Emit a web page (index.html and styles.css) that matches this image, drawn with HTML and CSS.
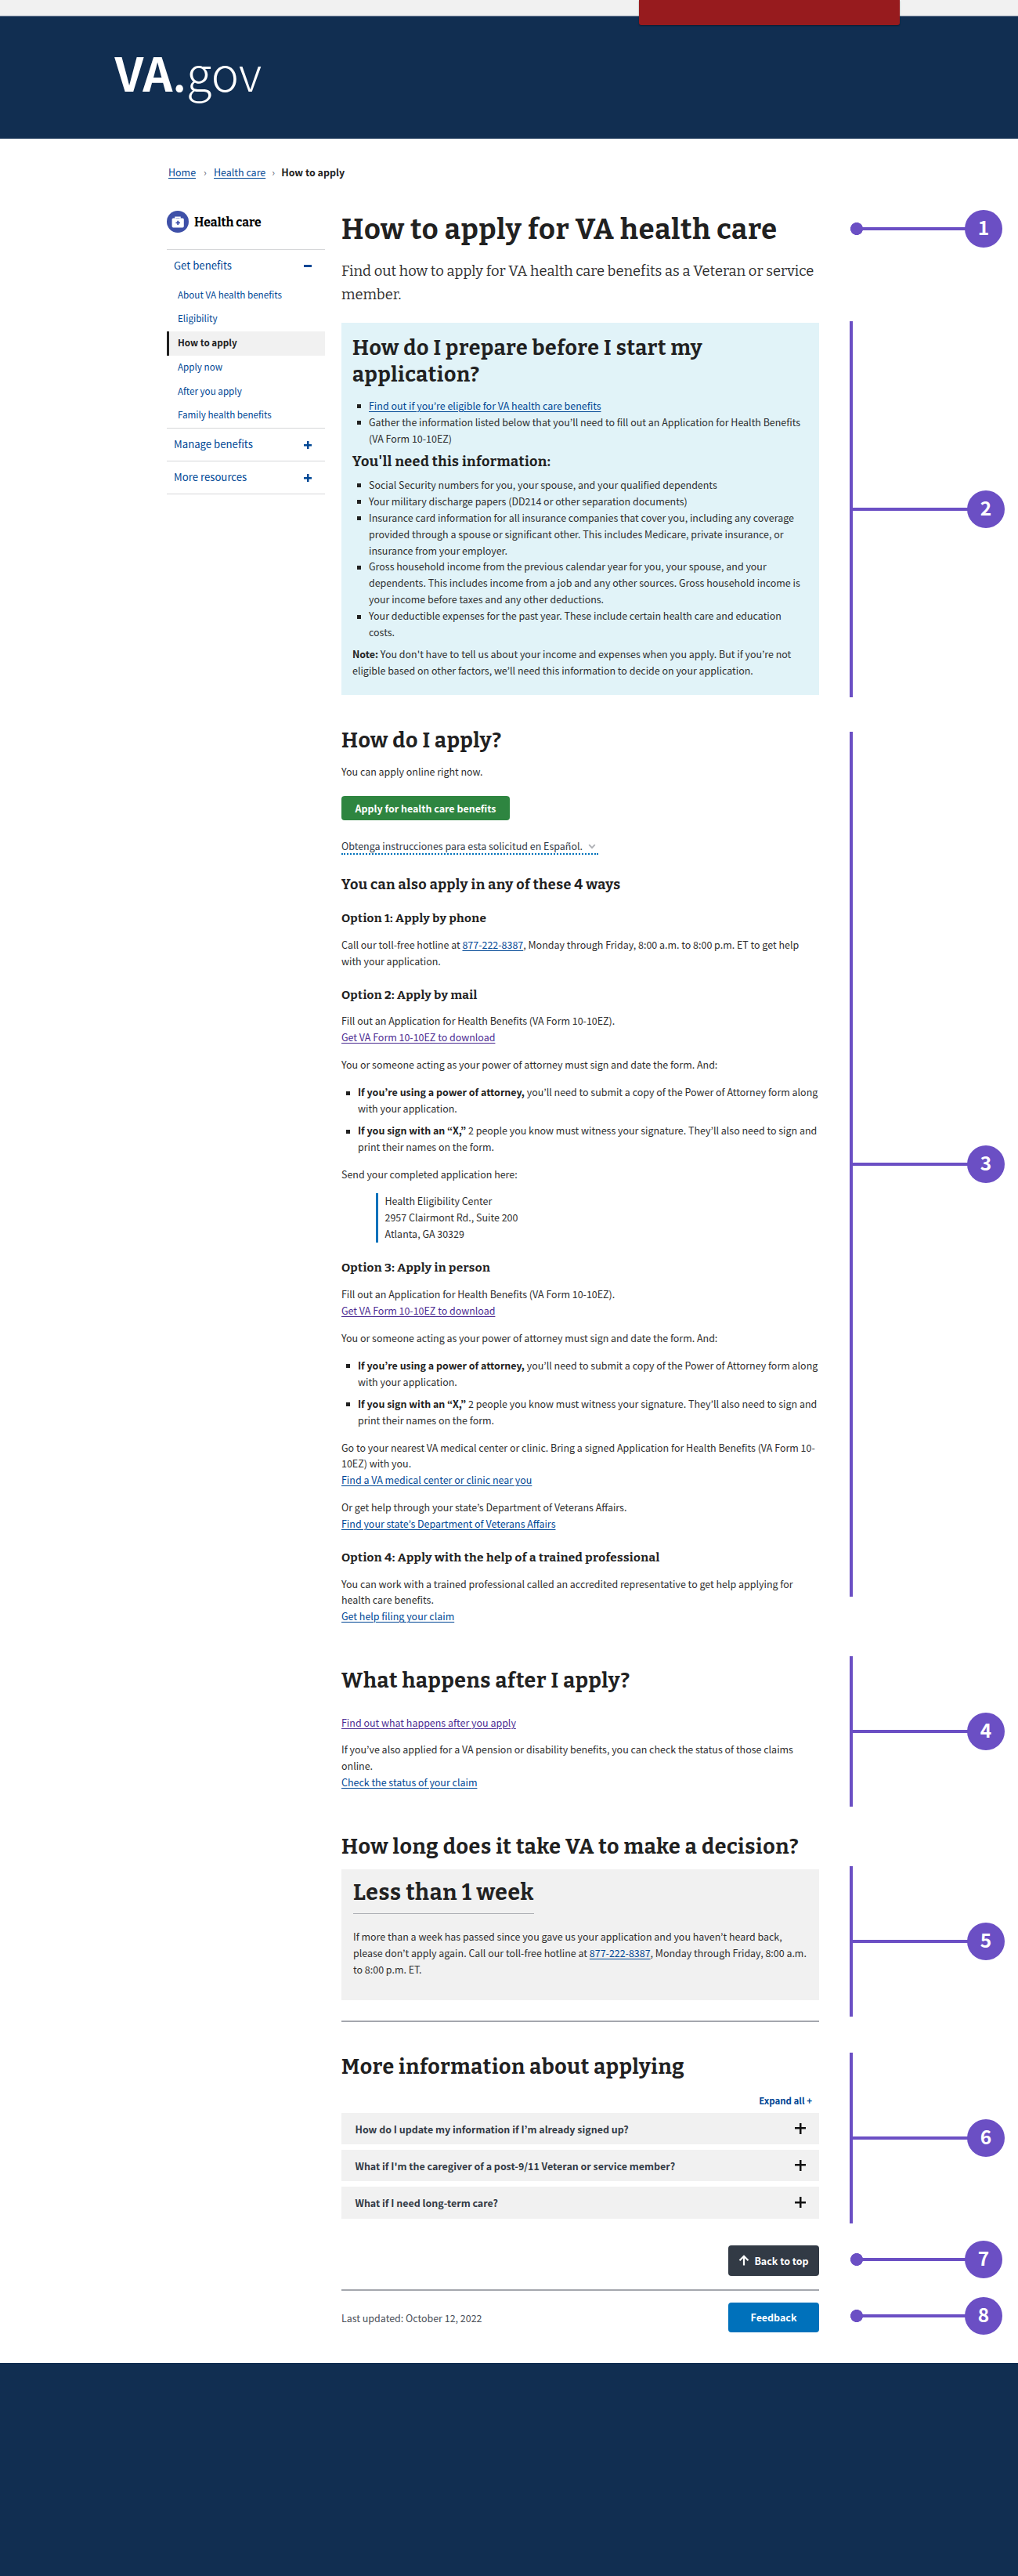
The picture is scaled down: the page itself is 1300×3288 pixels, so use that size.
FILE: index.html
```html
<!DOCTYPE html>
<html lang="en">
<head>
<meta charset="utf-8">
<title>How to apply for VA health care</title>
<link rel="stylesheet" href="styles.css">
</head>
<body>
<div class="page">
  <div class="topbar"><div class="topbar-tab"></div></div>
  <header class="header"><div class="logo"><b>VA</b><span class="logo-dot">.</span>gov</div></header>

  <nav class="breadcrumb">
    <a href="#">Home</a><span class="sep sep-first">›</span><a href="#">Health care</a><span class="sep">›</span><b>How to apply</b>
  </nav>

  <div class="columns">
    <aside class="sidebar">
      <div class="side-title">
        <svg class="side-icon" viewBox="0 0 28 28"><circle cx="14" cy="14" r="14" fill="#3e50a8"/><path d="M11 9.800V8.300h6v1.500" fill="none" stroke="#fff" stroke-width="1.500"/><rect x="6.600" y="9.400" width="15.200" height="12" rx="1.600" fill="#fff"/><path d="M14.200 12.700v5.400M11.500 15.400h5.400" stroke="#3e50a8" stroke-width="1.900"/></svg>
        <span>Health care</span>
      </div>
      <div class="side-group">
        <div class="side-head">Get benefits<i class="sign minus"></i></div>
        <ul class="side-list">
          <li>About VA health benefits</li>
          <li>Eligibility</li>
          <li class="active">How to apply</li>
          <li>Apply now</li>
          <li>After you apply</li>
          <li>Family health benefits</li>
        </ul>
      </div>
      <div class="side-group"><div class="side-head">Manage benefits<i class="sign plus"></i></div></div>
      <div class="side-group last"><div class="side-head">More resources<i class="sign plus"></i></div></div>
    </aside>

    <main class="main">
      <h1>How to apply for VA health care</h1>
      <p class="intro">Find out how to apply for VA health care benefits as a Veteran or service<br>member.</p>

      <section class="prepare">
        <h2>How do I prepare before I start my<br>application?</h2>
        <ul class="list">
          <li><a href="#">Find out if you’re eligible for VA health care benefits</a></li>
          <li>Gather the information listed below that you’ll need to fill out an Application for Health Benefits<br>(VA Form 10-10EZ)</li>
        </ul>
        <h3>You'll need this information:</h3>
        <ul class="list">
          <li>Social Security numbers for you, your spouse, and your qualified dependents</li>
          <li>Your military discharge papers (DD214 or other separation documents)</li>
          <li>Insurance card information for all insurance companies that cover you, including any coverage<br>provided through a spouse or significant other. This includes Medicare, private insurance, or<br>insurance from your employer.</li>
          <li>Gross household income from the previous calendar year for you, your spouse, and your<br>dependents. This includes income from a job and any other sources. Gross household income is<br>your income before taxes and any other deductions.</li>
          <li>Your deductible expenses for the past year. These include certain health care and education<br>costs.</li>
        </ul>
        <p class="note"><b>Note:</b> You don't have to tell us about your income and expenses when you apply. But if you’re not<br>eligible based on other factors, we’ll need this information to decide on your application.</p>
      </section>

      <section class="apply">
        <h2>How do I apply?</h2>
        <p class="lead">You can apply online right now.</p>
        <button class="btn btn-green">Apply for health care benefits</button>
        <div class="spanish">Obtenga instrucciones para esta solicitud en Español.<svg class="chev" viewBox="0 0 10 7"><path d="M1.200 1.200L5 5.200L8.800 1.200" fill="none" stroke="#aeb0b5" stroke-width="1.800"/></svg></div>
        <h3>You can also apply in any of these 4 ways</h3>

        <h4 class="first">Option 1: Apply by phone</h4>
        <p>Call our toll-free hotline at <a href="#">877-222-8387</a>, Monday through Friday, 8:00 a.m. to 8:00 p.m. ET to get help<br>with your application.</p>

        <h4>Option 2: Apply by mail</h4>
        <p>Fill out an Application for Health Benefits (VA Form 10-10EZ).<br><a class="visited" href="#">Get VA Form 10-10EZ to download</a></p>
        <p>You or someone acting as your power of attorney must sign and date the form. And:</p>
        <ul class="list spaced">
          <li><b>If you’re using a power of attorney,</b> you’ll need to submit a copy of the Power of Attorney form along<br>with your application.</li>
          <li><b>If you sign with an “X,”</b> 2 people you know must witness your signature. They’ll also need to sign and<br>print their names on the form.</li>
        </ul>
        <p>Send your completed application here:</p>
        <address>Health Eligibility Center<br>2957 Clairmont Rd., Suite 200<br>Atlanta, GA 30329</address>

        <h4>Option 3: Apply in person</h4>
        <p>Fill out an Application for Health Benefits (VA Form 10-10EZ).<br><a class="visited" href="#">Get VA Form 10-10EZ to download</a></p>
        <p>You or someone acting as your power of attorney must sign and date the form. And:</p>
        <ul class="list spaced">
          <li><b>If you’re using a power of attorney,</b> you’ll need to submit a copy of the Power of Attorney form along<br>with your application.</li>
          <li><b>If you sign with an “X,”</b> 2 people you know must witness your signature. They’ll also need to sign and<br>print their names on the form.</li>
        </ul>
        <p>Go to your nearest VA medical center or clinic. Bring a signed Application for Health Benefits (VA Form 10-<br>10EZ) with you.<br><a href="#">Find a VA medical center or clinic near you</a></p>
        <p>Or get help through your state’s Department of Veterans Affairs.<br><a href="#">Find your state’s Department of Veterans Affairs</a></p>

        <h4>Option 4: Apply with the help of a trained professional</h4>
        <p>You can work with a trained professional called an accredited representative to get help applying for<br>health care benefits.<br><a href="#">Get help filing your claim</a></p>
      </section>

      <section class="after">
        <h2>What happens after I apply?</h2>
        <p class="lead"><a class="visited" href="#">Find out what happens after you apply</a></p>
        <p>If you’ve also applied for a VA pension or disability benefits, you can check the status of those claims<br>online.<br><a href="#">Check the status of your claim</a></p>
      </section>

      <section class="decision">
        <h2>How long does it take VA to make a decision?</h2>
        <div class="answer">
          <h2>Less than 1 week</h2>
          <p>If more than a week has passed since you gave us your application and you haven’t heard back,<br>please don’t apply again. Call our toll-free hotline at <a href="#">877-222-8387</a>, Monday through Friday, 8:00 a.m.<br>to 8:00 p.m. ET.</p>
        </div>
      </section>

      <section class="more">
        <h2>More information about applying</h2>
        <div class="expand"><span>Expand all +</span></div>
        <div class="accordion">
          <div class="acc"><span>How do I update my information if I’m already signed up?</span><i class="sign plus"></i></div>
          <div class="acc"><span>What if I'm the caregiver of a post-9/11 Veteran or service member?</span><i class="sign plus"></i></div>
          <div class="acc"><span>What if I need long-term care?</span><i class="sign plus"></i></div>
        </div>
      </section>

      <div class="top-row">
        <button class="btn btn-dark"><svg class="arrow" viewBox="0 0 14 14"><path d="M7 13.500V2M1.500 7.300L7 1.800L12.500 7.300" fill="none" stroke="#fff" stroke-width="2.200"/></svg><span>Back to top</span></button>
      </div>
      <div class="updated-row"><span>Last updated: October 12, 2022</span><button class="btn btn-blue">Feedback</button></div>
    </main>
  </div>

  <footer class="footer"></footer>

  <div class="pins">
    <div class="pin dot p1"><b>1</b></div>
    <div class="pin span p2"><b>2</b></div>
    <div class="pin span p3"><b>3</b></div>
    <div class="pin span p4"><b>4</b></div>
    <div class="pin span p5"><b>5</b></div>
    <div class="pin span p6"><b>6</b></div>
    <div class="pin dot p7"><b>7</b></div>
    <div class="pin dot p8"><b>8</b></div>
  </div>
</div>
</body>
</html>
```
FILE: styles.css
```css
* { box-sizing: border-box; }

body {
  margin: 0;
  background: #fff;
  color: #2e2e2e;
  font-family: "Source Sans Pro", "Noto Sans CJK KR", "Open Sans", sans-serif;
  font-size: 12.46px;
  line-height: 20.9px;
}

.page { position: relative; width: 1300px; height: 3288px; display: flex; flex-direction: column; overflow: hidden; }

h1, h2, h3, h4, .intro, .side-title { font-family: Bitter, "DejaVu Serif Condensed", serif; }
h1, h2, h3, h4, p, ul, address { margin: 0; padding: 0; }
h1, h2, h3, h4 { color: #212121; font-weight: 700; letter-spacing: .023em; white-space: nowrap; }
p, li, address { white-space: nowrap; font-style: normal; }
b { color: #212121; }
a { color: #004795; text-underline-offset: 1.5px; text-decoration-thickness: 1px; }
a.visited { color: #4c2c92; }

.topbar { height: 21px; background: #f1f1f1; border-bottom: 1px solid #7d8c9f; padding-left: 816px; }
.topbar-tab { position: relative; width: 333px; height: 32px; background: #971b1e; border-radius: 0 0 3px 3px; box-shadow: 0 1px 2px rgba(0,0,0,.4); }
.header { height: 156px; background: #112e51; padding: 50px 0 0 146.500px; }
.logo { color: #fff; font-size: 59.500px; line-height: 40px; font-weight: 300; }
.logo b { color: #fff; font-weight: 700; }
.logo-dot { font-weight: 500; }

.breadcrumb { display: flex; padding: 33px 0 0 215px; height: 91.500px; }
.sep { color: #5b616b; width: 20px; padding-left: 8px; }
.sep-first { width: 23px; padding-left: 10px; }

.columns { display: flex; gap: 21px; padding-left: 213px; }
.sidebar { width: 202px; }
.side-title { display: flex; align-items: center; gap: 7px; height: 28px; font-size: 15.700px; font-weight: 700; color: #000; }
.side-title span { padding-top: 3px; }
.side-icon { width: 28px; height: 28px; }
.side-group { border-top: 1px solid #d6d7d9; }
.side-title + .side-group { margin-top: 21.500px; }
.side-group.last { border-bottom: 1px solid #d6d7d9; }
.side-head { display: flex; align-items: center; justify-content: space-between; height: 41px; padding: 0 17px 0 9px; color: #004795; font-size: 13.2px; }
.side-list { list-style: none; padding-top: 1.500px; }
.side-list li { height: 30.800px; line-height: 28.500px; padding-left: 14px; font-size: 11.66px; color: #004795; }
.side-list .active { padding-left: 11px; border-left: 3px solid #212121; background: #f1f1f1; color: #212121; font-weight: 700; }

.sign { display: block; width: 10px; height: 10px; background: linear-gradient(currentColor, currentColor) center / 100% 3px no-repeat; }
.sign.plus { background: linear-gradient(currentColor, currentColor) center / 100% 2.500px no-repeat, linear-gradient(currentColor, currentColor) center / 2.500px 100% no-repeat; }

.main { width: 610px; padding-top: 2.500px; }
h1 { font-size: 36.080px; line-height: 44px; }
h2 { font-size: 26.680px; line-height: 34px; }
h3 { font-size: 17.950px; line-height: 24px; }
h4 { font-size: 15.300px; line-height: 22px; margin-top: 21.500px; }
h4 + p { margin-top: 12px; }
p, .list { margin-top: 14px; margin-bottom: -.8px; padding-top: .8px; }
h4 + p { margin-top: 12px; }
.intro { margin: 16px 0 0; padding: 0; font-size: 18.35px; line-height: 30px; }

.list { list-style: none; padding-left: 21px; }
.list li { position: relative; }
.list li::before { content: ""; position: absolute; left: -15px; top: 8.500px; width: 5px; height: 5px; background: #212121; }
.spaced li + li { margin-top: 7.200px; }

.prepare { margin-top: 21px; height: 475px; padding: 15px 14px 0; background: #e1f3f8; }
.prepare h2 + .list { margin-top: 12px; }
.prepare h3 { margin-top: 7px; }
.prepare h3 + .list { margin-top: 7.400px; }
.note { margin-top: 7.300px; }

.apply { margin-top: 41px; }
.apply .lead { margin-top: 12.300px; }
.btn { display: flex; align-items: center; justify-content: center; border: 0; padding: 0; color: #fff; font: 700 12.46px/20px "Source Sans Pro", "Noto Sans CJK KR", sans-serif; border-radius: 4px; }
.btn-green { width: 215px; height: 31px; margin-top: 21px; background: #2e8540; }
.spanish { display: block; width: 328px; margin-top: 23px; height: 20.500px; line-height: 20.600px; color: #323a45; border-bottom: 2px dotted #0071bb; white-space: nowrap; }
.chev { width: 10px; height: 7px; margin-left: 7px; vertical-align: 1px; }
.apply h3 { margin-top: 26.500px; }
h4.first { margin-top: 20px; }
address { margin: 14px 0 0 44px; padding-left: 8.500px; border-left: 3px solid #0071bb; }

.after, .decision { margin-top: 55px; }
.after .lead { margin-top: 25.300px; }
.decision > h2 { font-size: 26.780px; }
.answer { margin-top: 11.200px; height: 167.700px; padding: 13.500px 15px 0; background: #f1f1f1; }
.answer h2 { display: inline-block; padding-bottom: 9px; border-bottom: 1px solid #aeb0b5; vertical-align: top; font-size: 28.300px; }
.answer p { margin-top: 18.600px; }

.more { margin-top: 26px; padding-top: 39.500px; border-top: 2px solid #a4a7ae; }
.expand { margin-top: 17.700px; padding-right: 9px; text-align: right; font-weight: 700; font-size: 11.5px; line-height: 18px; color: #004795; }
.accordion { display: flex; flex-direction: column; gap: 7px; margin-top: 6.500px; }
.acc { display: flex; align-items: center; justify-content: space-between; height: 40.200px; padding: 0 17px 0 17.500px; background: #f1f1f1; color: #323a45; font-weight: 700; }
.acc span { padding-top: 2.400px; }
.acc .sign { width: 14px; height: 14px; color: #111; margin-top: -1px; }

.top-row { display: flex; justify-content: flex-end; padding: 34px 0 17.500px; border-bottom: 2px solid #a4a7ae; }
.btn-dark { width: 116px; height: 39px; background: #323a45; gap: 6px; }
.btn-dark span { padding-top: 2px; }
.arrow { width: 14px; height: 14px; }
.updated-row { display: flex; justify-content: space-between; align-items: center; margin-top: 15px; color: #4a4f58; }
.updated-row > span { padding-top: 3px; }
.btn-blue { width: 116px; height: 38px; background: #0071bb; }

.footer { margin-top: auto; height: 272px; background: #112e51; }

.pin { position: absolute; left: 1085px; }
.pin.dot { left: 1086px; width: 194px; height: 48px; background: radial-gradient(circle at 8px 24px, #6b4fc4 7.700px, transparent 8.300px), linear-gradient(#6b4fc4, #6b4fc4) 8px 22px / 160px 4px no-repeat; }
.pin.span { width: 198px; border-left: 4px solid #6b4fc4; }
.pin.span::before { content: ""; position: absolute; left: 0; right: 40px; top: calc(50% - 2px); height: 4px; background: #6b4fc4; }
.pin b { position: absolute; right: 0; top: calc(50% - 24px); width: 48px; height: 48px; border-radius: 50%; background: #6b4fc4; color: #fff; text-align: center; font-size: 24.500px; line-height: 44px; }
.p1 { top: 268px; }
.p2 { top: 410px; height: 480px; }
.p3 { top: 934px; height: 1104px; }
.p4 { top: 2114px; height: 192px; }
.p5 { top: 2382px; height: 192px; }
.p6 { top: 2620px; height: 218px; }
.p7 { top: 2860px; }
.p8 { top: 2932px; }
```
